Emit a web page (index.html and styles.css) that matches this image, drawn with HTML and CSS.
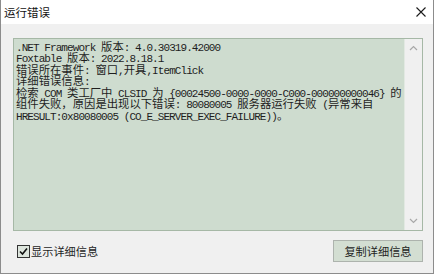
FILE: index.html
```html
<!DOCTYPE html>
<html lang="zh-CN">
<head>
    <meta charset="utf-8">
    <title>运行错误</title>
    <link rel="stylesheet" href="styles.css">
</head>
<body>
    <div class="window">
        <div class="titlebar">
            <span class="title">运行错误</span>
            <svg class="close" width="10" height="10" viewBox="0 0 10 10">
                <path d="M0.5 0.5 L9.5 9.5 M9.5 0.5 L0.5 9.5" stroke="#1a1a1a" stroke-width="1.1" fill="none"/>
            </svg>
        </div>

        <div class="content">
            <div class="detail">
                <div class="text">
                    <div class="line">.NET Framework <span class="zh">版本</span>: 4.0.30319.42000</div>
                    <div class="line">Foxtable <span class="zh">版本</span>: 2022.8.18.1</div>
                    <div class="line"><span class="zh">错误所在事件</span>: <span class="zh">窗口</span>,<span class="zh">开具</span>,ItemClick</div>
                    <div class="line"><span class="zh">详细错误信息</span>:</div>
                    <div class="line"><span class="zh">检索</span> COM <span class="zh">类工厂中</span> CLSID <span class="zh">为</span> {00024500-0000-0000-C000-000000000046} <span class="zh">的</span></div>
                    <div class="line"><span class="zh">组件失败，原因是出现以下错误</span>: 80080005 <span class="zh">服务器运行失败</span> (<span class="zh">异常来自</span></div>
                    <div class="line">HRESULT:0x80080005 (CO_E_SERVER_EXEC_FAILURE))<span class="zh">。</span></div>
                </div>
                <div class="scrollbar">
                    <svg width="9" height="6" viewBox="0 0 9 6"><path d="M1 5 L4.5 1.5 L8 5" stroke="#a8a8a8" stroke-width="1.2" fill="none"/></svg>
                    <svg width="9" height="6" viewBox="0 0 9 6"><path d="M1 1 L4.5 4.5 L8 1" stroke="#a8a8a8" stroke-width="1.2" fill="none"/></svg>
                </div>
            </div>

            <div class="footer">
                <label class="check">
                    <span class="box">
                        <svg width="9" height="9" viewBox="0 0 9 9"><path d="M1 4.5 L3.5 7 L8 1.5" stroke="#111" stroke-width="1.6" fill="none"/></svg>
                    </span>
                    显示详细信息
                </label>
                <button class="copy">复制详细信息</button>
            </div>
        </div>
    </div>
</body>
</html>
```

FILE: styles.css
```css
body {
    margin: 0;
    background-color: #fff;
}

.window {
    width: 434px;
    height: 274px;
    box-sizing: border-box;
    border: 1px solid #8c8c8c;
    border-top: none;
    background-color: #f0f0f0;
    font-family: "Noto Sans CJK SC", sans-serif;
    color: #1e1e1e;
}

.titlebar {
    height: 24px;
    background-color: #fff;
    display: flex;
    align-items: center;
    justify-content: space-between;
    padding: 0 7px 0 3px;
}

.title {
    font-size: 11.5px;
    color: #111;
}

.content {
    padding: 14px 10px 0 12px;
}

.detail {
    display: flex;
    height: 193px;
    box-sizing: border-box;
    border: 1px solid #a6b8a6;
    background-color: #cedccf;
}

.text {
    flex: 1;
    padding: 1.5px 0 0 2px;
    font-family: "Liberation Mono", monospace;
    font-size: 11px;
    letter-spacing: -0.93px;
    color: #1e1e1e;
}

.line {
    height: 11.5px;
    line-height: 11.5px;
    white-space: pre;
}

.zh {
    font-family: "Noto Sans CJK SC", sans-serif;
    font-size: 11.35px;
    letter-spacing: 0;
}

.scrollbar {
    width: 17px;
    background-color: #f0f0f0;
    border-left: 1px solid #e2e9e2;
    display: flex;
    flex-direction: column;
    justify-content: space-between;
    align-items: center;
    padding: 6px 0 6px;
}

.footer {
    display: flex;
    justify-content: space-between;
    align-items: center;
    margin-top: 9px;
    padding-left: 4px;
}

.check {
    display: flex;
    align-items: center;
    gap: 1px;
    font-size: 11.2px;
}

.box {
    width: 13px;
    height: 13px;
    box-sizing: border-box;
    border: 1px solid #333;
    background-color: #dde5dd;
    display: flex;
    align-items: center;
    justify-content: center;
}

.copy {
    width: 90px;
    height: 22px;
    padding: 0;
    border: 1px solid #adb3ad;
    background-color: #d3ded2;
    font-family: "Noto Sans CJK SC", sans-serif;
    font-size: 11.2px;
    color: #1e1e1e;
}
```
